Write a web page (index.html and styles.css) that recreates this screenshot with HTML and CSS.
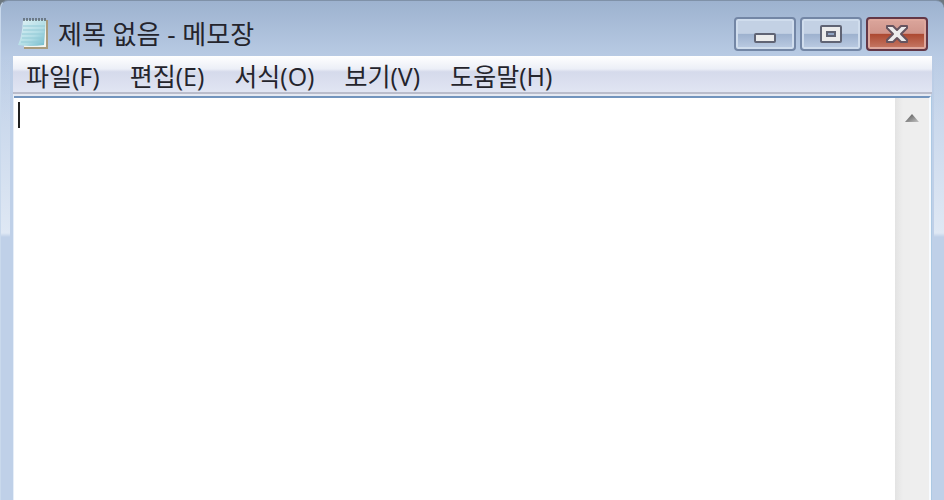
FILE: index.html
```html
<!DOCTYPE html>
<html lang="ko">

<head>
    <meta charset="UTF-8">
    <meta name="viewport" content="width=device-width, initial-scale=1.0">
    <title>제목 없음 - 메모장</title>

    <link rel="stylesheet" href="styles.css">
</head>

<body>
    <div class="window">
        <header class="titlebar">
            <svg class="app-icon" width="32" height="34" viewBox="0 0 32 34" aria-hidden="true">
                <defs>
                    <linearGradient id="paper" x1="0" y1="0" x2="1" y2="1">
                        <stop offset="0" stop-color="#e2f3f6" />
                        <stop offset="0.6" stop-color="#b0dce5" />
                        <stop offset="1" stop-color="#6db9ca" />
                    </linearGradient>
                </defs>
                <path d="M8 3H30V32H6V29H8Z" fill="#a99b7c" />
                <path d="M7 3H28V30H6Z" fill="#f4f5ef" />
                <path d="M5 3H28L26 28Q12 30 0 28Q4 20 5 3Z" fill="url(#paper)" />
                <path d="M5 9H27M5 13H27M4 17H26M4 21H26M3 25H25" stroke="#93cad6" stroke-width="1" />
                <path d="M6 1V4M9 1V4M12 1V4M15 1V4M18 1V4M21 1V4M24 1V4M27 1V4" stroke="#59656c" stroke-width="1.5" />
            </svg>
            <h1>제목 없음 - 메모장</h1>
            <div class="window-buttons">
                <button type="button" aria-label="최소화">
                    <svg width="24" height="20" viewBox="0 0 24 20">
                        <rect x="2" y="10" width="20" height="8" rx="1" fill="#ececec" stroke="#606474" stroke-width="2" />
                    </svg>
                </button>
                <button type="button" aria-label="최대화">
                    <svg width="24" height="20" viewBox="0 0 24 20">
                        <rect x="2" y="2" width="20" height="16" rx="1" fill="#ececec" stroke="#606474" stroke-width="2" />
                        <rect x="8" y="8" width="8" height="4" fill="#91a5c4" stroke="#606474" stroke-width="2" />
                    </svg>
                </button>
                <button type="button" class="close" aria-label="닫기">
                    <svg width="24" height="20" viewBox="0 0 24 20">
                        <path d="M2 2H8L12 6L16 2H22V4L16 10L22 16V18H16L12 14L8 18H2V16L8 10L2 4Z" fill="#ececec" stroke="#66545f" stroke-width="2" stroke-linejoin="round" />
                    </svg>
                </button>
            </div>
        </header>

        <nav class="menubar">
            <button type="button">파일(F)</button>
            <button type="button">편집(E)</button>
            <button type="button">서식(O)</button>
            <button type="button">보기(V)</button>
            <button type="button">도움말(H)</button>
        </nav>

        <main class="editor">
            <textarea aria-label="텍스트 편집" spellcheck="false"></textarea>
            <span class="caret"></span>
            <div class="scrollbar">
                <button type="button" aria-label="위로 스크롤">
                    <svg width="16" height="10" viewBox="0 0 16 10">
                        <defs>
                            <linearGradient id="arrow" x1="0" y1="0" x2="1" y2="1">
                                <stop offset="0.3" stop-color="#707070" />
                                <stop offset="1" stop-color="#c4c4c4" />
                            </linearGradient>
                        </defs>
                        <path d="M8 1L15 9H1Z" fill="url(#arrow)" />
                    </svg>
                </button>
            </div>
        </main>
    </div>
</body>

</html>
```
FILE: styles.css
```css
* {
    box-sizing: border-box;
}

body {
    margin: 0;
    background-color: #6d7880;
    font-family: "Open Sans", "Noto Sans CJK KR", sans-serif;
    color: #24242c;
}

button {
    margin: 0;
    padding: 0;
    border: none;
    background: none;
    color: inherit;
    font: inherit;
}

svg {
    display: block;
}

.window {
    display: flex;
    flex-direction: column;
    height: 100vh;
    padding: 0 12px;
    border-top: 1px solid #7f91a8;
    border-left: 1px solid #c9d9ec;
    border-radius: 8px 8px 0 0;
    overflow: hidden;
    /* Glass highlights on both sides, then the frame itself */
    background:
        linear-gradient(rgba(222, 232, 244, 0) 56px, #dfe8f4 232px, #bfd0e8 236px) left top / 9px 236px no-repeat,
        linear-gradient(rgba(222, 232, 244, 0) 56px, #dfe8f4 232px, #bfd0e8 236px) right top / 10px 236px no-repeat,
        linear-gradient(#9db2cf, #b9cbe4 56px, #bfd0e8 120px);
}

/* Title bar */
.titlebar {
    flex: none;
    display: flex;
    align-items: center;
    height: 55px;
    padding: 10px 4px 0 5px;
}

.titlebar h1 {
    flex: 1;
    margin: 0 0 0 8px;
    font-size: 26px;
    font-weight: 400;
    line-height: 32px;
}

.window-buttons {
    display: flex;
    gap: 4px;
}

.window-buttons button {
    display: flex;
    align-items: center;
    justify-content: center;
    width: 62px;
    height: 34px;
    border: 2px solid #7386a5;
    border-radius: 4px;
    background: linear-gradient(#c3d1e4 48%, #9db1ce 50%, #bccce3);
    box-shadow: inset 0 0 0 2px #d0dded;
}

.window-buttons .close {
    border-color: #633746;
    background: linear-gradient(#dba69c, #d0958b 48%, #ac4830 50%, #c77b68);
    box-shadow: inset 0 0 0 2px #dfa89d;
}

/* Menu */
.menubar {
    flex: none;
    display: flex;
    gap: 30px;
    height: 38px;
    padding: 2px 13px 0;
    border-bottom: 2px solid #b9bccb;
    background: linear-gradient(#ffffff, #eceff7 36%, #d5daeb 44%, #e1e5f3);
}

.menubar button {
    height: 36px;
    font-size: 25px;
    line-height: 36px;
    white-space: nowrap;
}

/* Text area */
.editor {
    position: relative;
    flex: 1;
    display: flex;
    min-height: 0;
    margin-right: 1px;
    border-top: 2px solid #e5e9f2;
    border-left: 1px solid #e6eef8;
    background-color: #ffffff;
}

.editor textarea {
    flex: 1;
    min-width: 0;
    padding: 4px;
    border: none;
    border-top: 2px solid #7294bd;
    outline: none;
    resize: none;
    font: inherit;
    font-size: 25px;
}

.caret {
    position: absolute;
    top: 6px;
    left: 4px;
    width: 2px;
    height: 26px;
    background-color: #222222;
}

.scrollbar {
    width: 36px;
    border-top: 2px solid #7294bd;
    border-right: 2px solid #f8fbff;
    background: linear-gradient(to right, #e3e3e3, #eeeeee 8px, #eeeeee);
    box-shadow: 1px 0 0 #acc9e3;
}

.scrollbar button {
    display: flex;
    align-items: center;
    justify-content: center;
    width: 100%;
    height: 40px;
}
```
